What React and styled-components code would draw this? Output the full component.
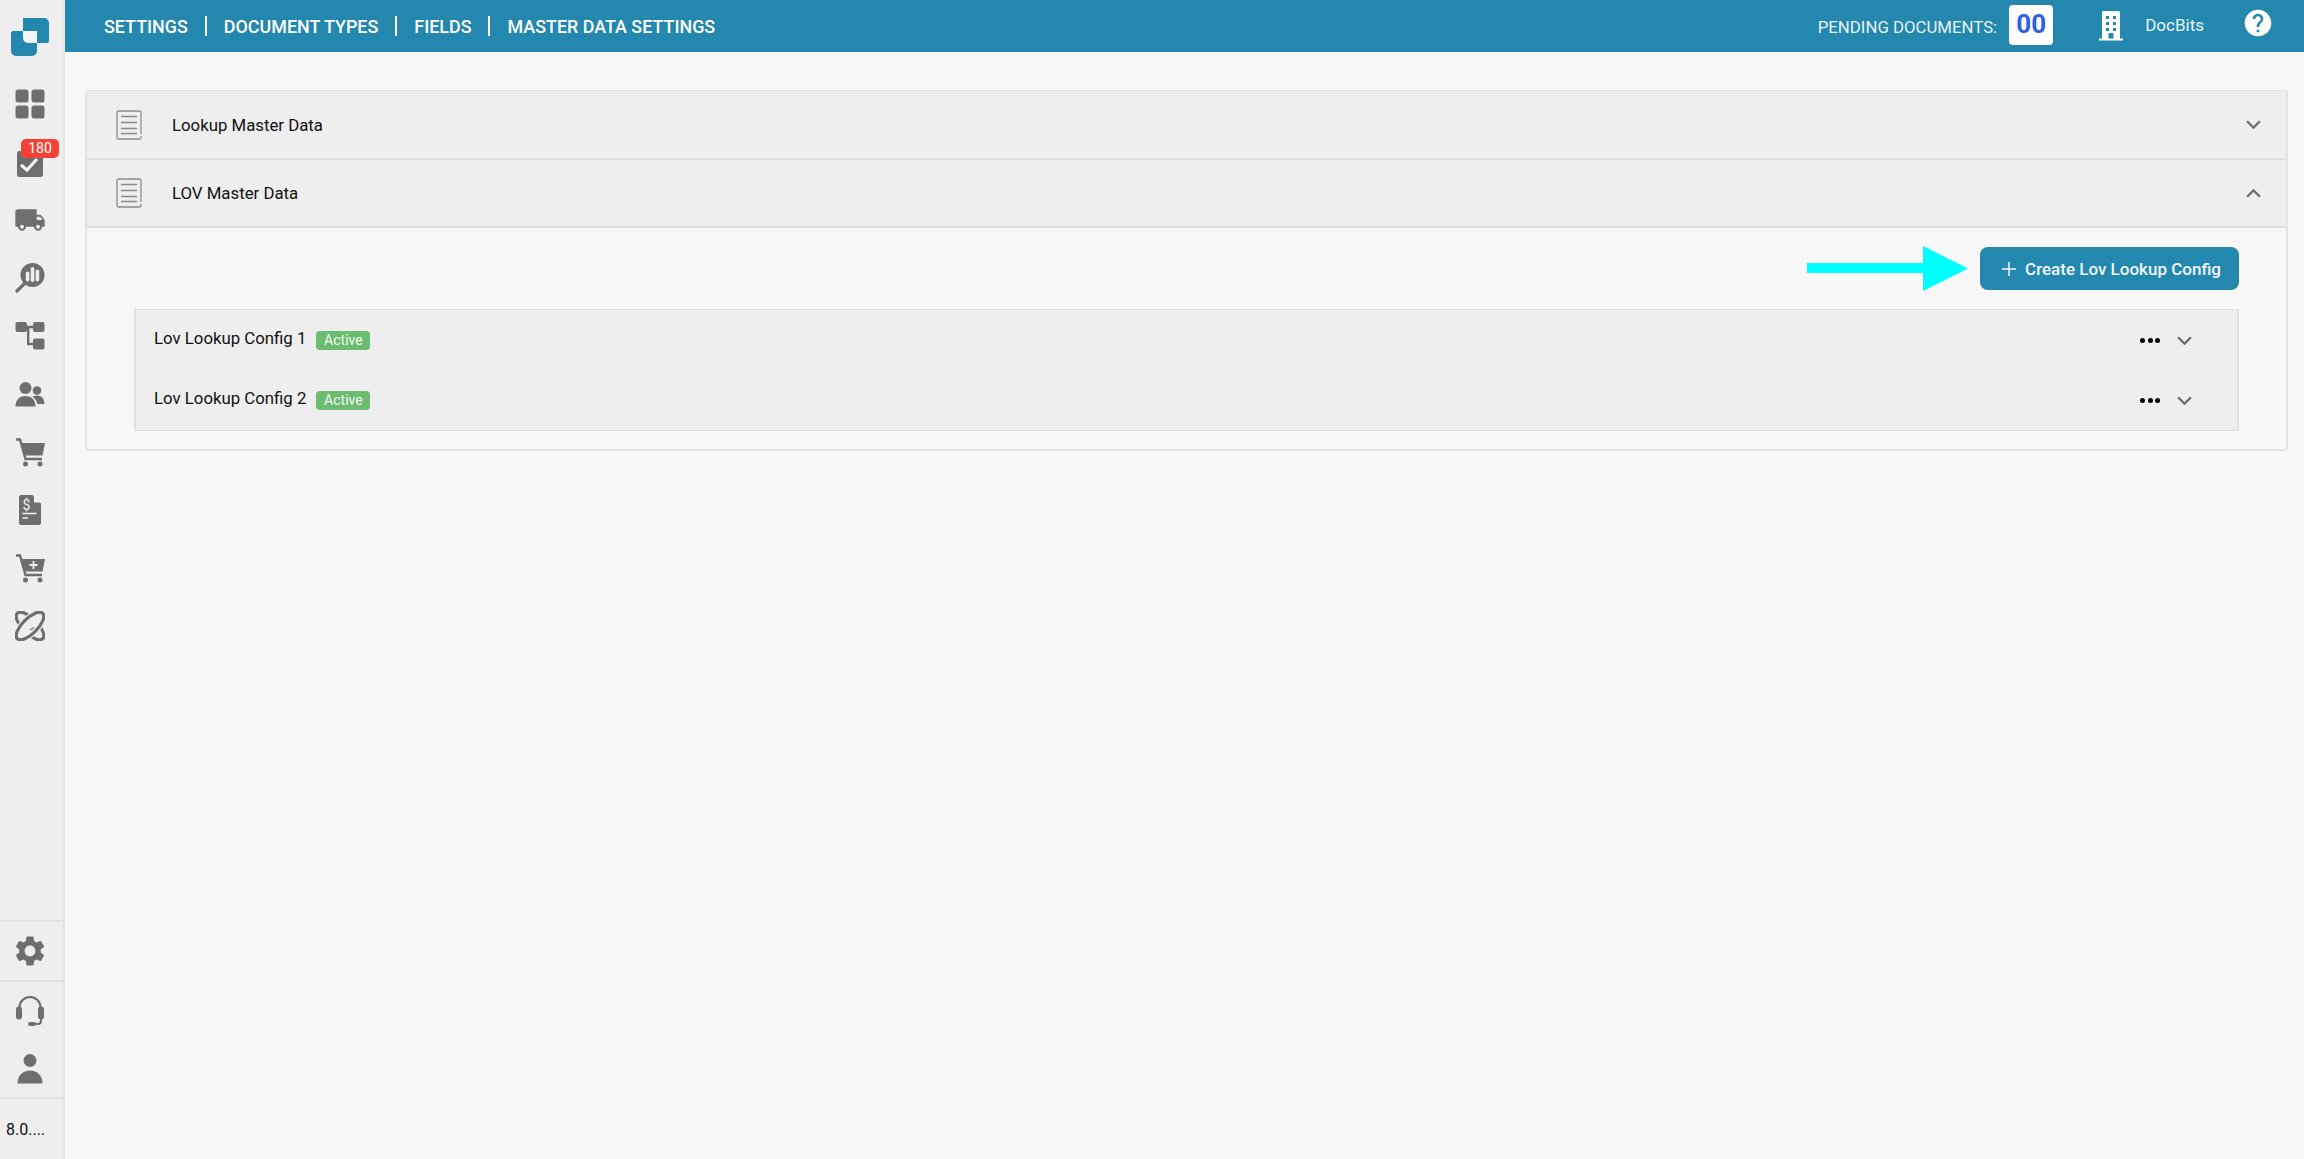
import styled, { createGlobalStyle } from 'styled-components';
import {
  MdExpandLess,
  MdExpandMore,
  MdHelp,
  MdLocalShipping,
  MdSettings,
} from 'react-icons/md';

const GlobalStyle = createGlobalStyle`
  html, body {
    margin: 0;
    padding: 0;
    height: 100%;
    background: #f7f7f7;
    font-family: Roboto, "Liberation Sans", sans-serif;
    color: #111;
  }
  * { box-sizing: border-box; }
`;

const Page = styled.div`
  display: flex;
  height: 1159px;
  overflow: hidden;
`;

const Sidebar = styled.aside`
  width: 65px;
  flex: none;
  display: flex;
  flex-direction: column;
  background: #eeeeee;
  border-right: 2px solid #e4e4e4;
`;

const LogoBox = styled.div`
  height: 75px;
  padding: 18px 0 0 11px;
`;

const Nav = styled.nav`
  flex: 1;
  display: flex;
  flex-direction: column;
`;

const NavItem = styled.div`
  position: relative;
  height: 58px;
  display: flex;
  align-items: center;
  justify-content: center;
  padding: ${({ $nudge }) => $nudge || 0}px 3px 0 0;
  color: #6e6e6e;
  font-size: ${({ $size }) => $size || 34}px;
  svg { display: block; }
`;

const Badge = styled.span`
  position: absolute;
  top: 6px;
  left: 21px;
  width: 38px;
  height: 19px;
  border-radius: 5px;
  background: #f44336;
  color: #fff;
  font-size: 14px;
  line-height: 19px;
  text-align: center;
`;

const BottomGroup = styled.div`
  display: flex;
  flex-direction: column;
  border-top: 2px solid #e0e0e0;
`;

const BottomItem = styled(NavItem)`
  height: ${({ $h }) => $h}px;
`;

const Version = styled.div`
  height: 62px;
  border-top: 2px solid #e0e0e0;
  padding: 21px 0 0 6px;
  font-size: 16px;
  line-height: 20px;
  color: #111;
`;

const Main = styled.div`
  flex: 1;
  display: flex;
  flex-direction: column;
  min-width: 0;
`;

const TopBar = styled.header`
  height: 52px;
  flex: none;
  display: flex;
  align-items: center;
  background: #2387ae;
  color: #fff;
  padding: 0 30px 0 39px;
`;

const TopNav = styled.div`
  display: flex;
  align-items: center;
  gap: 17px;
  flex: 1;
`;

const TopLink = styled.span`
  font-size: 17.9px;
  font-weight: 500;
`;

const TopDivider = styled.span`
  width: 2px;
  height: 20px;
  background: #fff;
`;

const PendingLabel = styled.span`
  font-size: 16.8px;
  color: #e8f4f8;
  margin-right: 12px;
  padding-top: 2px;
`;

const PendingCount = styled.span`
  width: 44px;
  height: 40px;
  border-radius: 4px;
  background: #fff;
  color: #2f5fe8;
  font-size: 26px;
  font-weight: 700;
  line-height: 38px;
  text-align: center;
  margin-right: 46px;
  margin-top: -2px;
`;

const Company = styled.span`
  font-size: 17px;
  color: #e8f4f8;
  margin: 0 38px 3px 22px;
`;

const HelpIcon = styled(MdHelp)`
  font-size: 32px;
  color: #fff;
  margin-top: -6px;
`;

const Content = styled.main`
  flex: 1;
  padding: 38px 16px 0 20px;
`;

const Panel = styled.section`
  border: 2px solid #e2e2e2;
  border-top-width: 1px;
  border-radius: 4px;
  overflow: hidden;
`;

const PanelHead = styled.div`
  height: ${({ $h }) => $h}px;
  display: flex;
  align-items: center;
  background: #eeeeee;
  border-bottom: 2px solid #dedede;
  padding: 0 18px 0 29px;
  font-size: 16.8px;
`;

const HeadTitle = styled.span`
  flex: 1;
  margin-left: 30px;
`;

const Chevron = styled.span`
  display: flex;
  font-size: 29px;
  color: #6e6e6e;
`;

const PanelBody = styled.div`
  padding: 18px 47px;
  background: #f7f7f7;
`;

const ActionRow = styled.div`
  display: flex;
  justify-content: flex-end;
  align-items: center;
  gap: 12px;
  margin-bottom: 18px;
`;

const CreateButton = styled.button`
  width: 259px;
  height: 43px;
  display: flex;
  align-items: center;
  justify-content: center;
  gap: 9px;
  border: 0;
  border-radius: 8px;
  padding: 0 0 0 4px;
  background: #2387ae;
  color: #f1f7fa;
  font-family: inherit;
  font-size: 17px;
  font-weight: 500;
`;

const ConfigList = styled.div`
  border: 2px solid #e0e0e0;
  border-top-width: 1px;
  border-bottom-width: 1px;
  background: #eeeeee;
`;

const ConfigRow = styled.div`
  height: 60px;
  display: flex;
  align-items: center;
  padding: 0 38px 0 18px;
  font-size: 16.8px;
`;

const ConfigName = styled.span`
  margin-right: 10px;
  margin-top: -4px;
`;

const StatusTag = styled.span`
  width: 54px;
  height: 19px;
  border-radius: 4px;
  background: #6bbb70;
  color: #f2faf2;
  font-size: 14px;
  line-height: 19px;
  text-align: center;
`;

const Spacer = styled.span`
  flex: 1;
`;

const Dots = styled.span`
  display: flex;
  gap: 2.5px;
  margin-right: 10px;
`;

const Dot = styled.i`
  width: 5px;
  height: 5px;
  border-radius: 50%;
  background: #000;
`;

const LogoMark = () => (
  <svg width="38" height="38" viewBox="0 0 38 38">
    <path
      fill="#2387ae"
      d="M12 0h21a5 5 0 0 1 5 5v18a2 2 0 0 1-2 2H26v8a5 5 0 0 1-5 5H5a5 5 0 0 1-5-5V15a2 2 0 0 1 2-2h10z"
    />
    <path fill="#f2f6f8" d="M12 13h14v12h-9a5 5 0 0 1-5-5z" />
  </svg>
);

const GridIcon = () => (
  <svg width="30" height="30" viewBox="0 0 30 30" fill="currentColor">
    <rect x="0.5" y="0.5" width="13" height="13" rx="2.5" />
    <rect x="16.5" y="0.5" width="13" height="13" rx="2.5" />
    <rect x="0.5" y="16.5" width="13" height="13" rx="2.5" />
    <rect x="16.5" y="16.5" width="13" height="13" rx="2.5" />
  </svg>
);

const TaskIcon = () => (
  <svg width="26" height="26" viewBox="0 0 26 26">
    <rect width="26" height="26" rx="2.5" fill="currentColor" />
    <path d="M4 14l6 5L20 8" fill="none" stroke="#f2f2f2" strokeWidth="3.2" />
  </svg>
);

const AnalyticsIcon = () => (
  <svg width="30" height="30" viewBox="0 0 30 30" fill="currentColor">
    <circle cx="17.5" cy="12" r="12" />
    <path d="M9.5 20.5L2 28" stroke="currentColor" strokeWidth="3.2" strokeLinecap="round" />
    <rect x="10.8" y="8.500" width="3.600" height="10" rx="1.800" fill="#eee" />
    <rect x="15.700" y="4" width="3.600" height="15" rx="1.800" fill="#eee" />
    <rect x="20.600" y="6.500" width="3.600" height="12" rx="1.800" fill="#eee" />
  </svg>
);

const TreeIcon = () => (
  <svg width="30" height="28" viewBox="0 0 30 28" fill="currentColor">
    <rect x="0.5" y="0" width="11.500" height="10" rx="2" />
    <rect x="18" y="0" width="11.500" height="10" rx="2" />
    <rect x="18" y="16.500" width="11.500" height="11" rx="2" />
    <path d="M12 3.800h6v2.400h-3.600v14.600H18v2.400h-6z" />
  </svg>
);

const PeopleIcon = () => (
  <svg width="30" height="25" viewBox="0 0 30 25" fill="currentColor">
    <circle cx="10.500" cy="6" r="6" />
    <path d="M0.500 24.500c0-6.500 4-10.500 10-10.500s10 4 10 10.500z" />
    <circle cx="22" cy="8.500" r="4.300" />
    <path d="M17.500 14.700c1.400-.8 3-1.200 4.700-1.200 4.500 0 7.300 3.500 7.300 8.500h-7c-.6-3-2.500-5.500-5-7.300z" />
  </svg>
);

const CartIcon = ({ plus }) => (
  <svg width="29" height="29" viewBox="0 0 29 29" fill="currentColor">
    <path d="M0 1.500h4l5.500 19.500H26" fill="none" stroke="currentColor" strokeWidth="2.400" />
    <path d="M5.500 5H29l-2.500 12.500h-17z" />
    {plus && <path d="M17.500 7v8M13.500 11h8" stroke="#f2f2f2" strokeWidth="1.800" />}
    <circle cx="9.500" cy="26" r="2.500" />
    <circle cx="24" cy="26" r="2.500" />
  </svg>
);

const QuoteIcon = () => (
  <svg width="22" height="30" viewBox="0 0 22 30" fill="currentColor">
    <path d="M2 0h11.500L22 8.500V28a2 2 0 0 1-2 2H2a2 2 0 0 1-2-2V2a2 2 0 0 1 2-2z" />
    <path d="M15 0.500L21.500 7.500H15z" fill="#f2f2f2" />
    <text x="3.500" y="14.500" fontSize="14" fontFamily="Roboto, sans-serif" fill="#f2f2f2">
      $
    </text>
    <path d="M3.500 18.500h14M3.500 23h5.500" stroke="#f2f2f2" strokeWidth="1.500" />
  </svg>
);

const AtomIcon = () => (
  <svg width="30" height="30" viewBox="0 0 30 30" fill="none" stroke="currentColor" strokeWidth="3.200">
    <ellipse cx="15" cy="15" rx="18" ry="7.500" transform="rotate(45 15 15)" />
    <ellipse cx="15" cy="15" rx="18" ry="7.500" transform="rotate(-45 15 15)" stroke="#eee" strokeWidth="5.500" fill="#eee" />
    <ellipse cx="15" cy="15" rx="18" ry="7.500" transform="rotate(-45 15 15)" />
    <path d="M19.500 15.500a5 5 0 0 1-5.500 3.500z" fill="currentColor" stroke="none" />
  </svg>
);

const HeadsetIcon = () => (
  <svg width="28" height="30" viewBox="0 0 28 30" fill="currentColor">
    <path d="M3.500 14v-2.500a10.500 10.500 0 0 1 21 0V14" fill="none" stroke="currentColor" strokeWidth="2.200" />
    <rect x="0" y="10.500" width="6" height="13" rx="3" />
    <rect x="22" y="10.500" width="6" height="13" rx="3" />
    <path d="M25 22v3a3 3 0 0 1-3 3h-6" fill="none" stroke="currentColor" strokeWidth="2" />
    <rect x="12" y="26" width="8" height="4" rx="2" />
  </svg>
);

const UserIcon = () => (
  <svg width="26" height="30" viewBox="0 0 26 30" fill="currentColor">
    <circle cx="13" cy="6.500" r="6.500" />
    <path d="M0.500 29.500c0-8 5.500-13 12.500-13s12.500 5 12.500 13z" />
  </svg>
);

const BuildingIcon = () => (
  <svg width="24" height="30" viewBox="0 0 24 30" fill="#fff">
    <path
      fillRule="evenodd"
      d="M3 1.500A1.500 1.500 0 0 1 4.500 0h15A1.500 1.500 0 0 1 21 1.500V27.500h3V29.500H0V27.500h3zM7 5v3h3V5zM14 5v3h3V5zM7 11v3h3v-3zM14 11v3h3v-3zM7 17v3h3v-3zM14 17v3h3v-3zM9.500 27.500h5V23a1 1 0 0 0-1-1h-3a1 1 0 0 0-1 1z"
    />
  </svg>
);

const DocIcon = () => (
  <svg width="26" height="30" viewBox="0 0 26 30" fill="none" stroke="#8a8a8a" strokeWidth="1.300">
    <path d="M25 24V2.500A1.500 1.500 0 0 0 23.500 1H2.500A1.500 1.500 0 0 0 1 2.500v25A1.500 1.500 0 0 0 2.500 29h21a1.500 1.500 0 0 0 1.500-1.500V26" />
    <path d="M5 6.500h16M5 12.500h16M5 18.500h16M5 23.500h16" strokeWidth="1.500" />
  </svg>
);

const Arrow = () => (
  <svg width="161" height="45" viewBox="0 0 161 45">
    <path fill="#00ffff" d="M0 17h116V0l45 22.500L116 45V27H0z" />
  </svg>
);

const PlusIcon = () => (
  <svg width="14" height="14" viewBox="0 0 14 14">
    <path d="M7 0v14M0 7h14" stroke="#f1f7fa" strokeWidth="1.500" />
  </svg>
);

const navItems = [
  { key: 'dash', icon: <GridIcon /> },
  { key: 'tasks', icon: <TaskIcon />, badge: 180, nudge: 4 },
  { key: 'truck', icon: <MdLocalShipping />, size: 32 },
  { key: 'analytics', icon: <AnalyticsIcon /> },
  { key: 'tree', icon: <TreeIcon /> },
  { key: 'people', icon: <PeopleIcon /> },
  { key: 'cart', icon: <CartIcon /> },
  { key: 'quote', icon: <QuoteIcon /> },
  { key: 'cartAdd', icon: <CartIcon plus /> },
  { key: 'atom', icon: <AtomIcon /> },
];

const configs = ['Lov Lookup Config 1', 'Lov Lookup Config 2'];

export default function App() {
  return (
    <>
      <GlobalStyle />
      <Page>
        <Sidebar>
          <LogoBox>
            <LogoMark />
          </LogoBox>
          <Nav>
            {navItems.map((item) => (
              <NavItem key={item.key} $size={item.size} $nudge={item.nudge}>
                {item.icon}
                {item.badge && <Badge>{item.badge}</Badge>}
              </NavItem>
            ))}
          </Nav>
          <BottomGroup>
            <BottomItem $h={58} $size={36}>
              <MdSettings />
            </BottomItem>
          </BottomGroup>
          <BottomGroup>
            <BottomItem $h={58}>
              <HeadsetIcon />
            </BottomItem>
            <BottomItem $h={57}>
              <UserIcon />
            </BottomItem>
          </BottomGroup>
          <Version>8.0....</Version>
        </Sidebar>
        <Main>
          <TopBar>
            <TopNav>
              <TopLink>SETTINGS</TopLink>
              <TopDivider />
              <TopLink>DOCUMENT TYPES</TopLink>
              <TopDivider />
              <TopLink>FIELDS</TopLink>
              <TopDivider />
              <TopLink>MASTER DATA SETTINGS</TopLink>
            </TopNav>
            <PendingLabel>PENDING DOCUMENTS:</PendingLabel>
            <PendingCount>00</PendingCount>
            <BuildingIcon />
            <Company>DocBits</Company>
            <HelpIcon />
          </TopBar>
          <Content>
            <Panel>
              <PanelHead $h={69}>
                <DocIcon />
                <HeadTitle>Lookup Master Data</HeadTitle>
                <Chevron>
                  <MdExpandMore />
                </Chevron>
              </PanelHead>
              <PanelHead $h={68}>
                <DocIcon />
                <HeadTitle>LOV Master Data</HeadTitle>
                <Chevron>
                  <MdExpandLess />
                </Chevron>
              </PanelHead>
              <PanelBody>
                <ActionRow>
                  <Arrow />
                  <CreateButton>
                    <PlusIcon />
                    Create Lov Lookup Config
                  </CreateButton>
                </ActionRow>
                <ConfigList>
                  {configs.map((name) => (
                    <ConfigRow key={name}>
                      <ConfigName>{name}</ConfigName>
                      <StatusTag>Active</StatusTag>
                      <Spacer />
                      <Dots>
                        <Dot />
                        <Dot />
                        <Dot />
                      </Dots>
                      <Chevron>
                        <MdExpandMore />
                      </Chevron>
                    </ConfigRow>
                  ))}
                </ConfigList>
              </PanelBody>
            </Panel>
          </Content>
        </Main>
      </Page>
    </>
  );
}
